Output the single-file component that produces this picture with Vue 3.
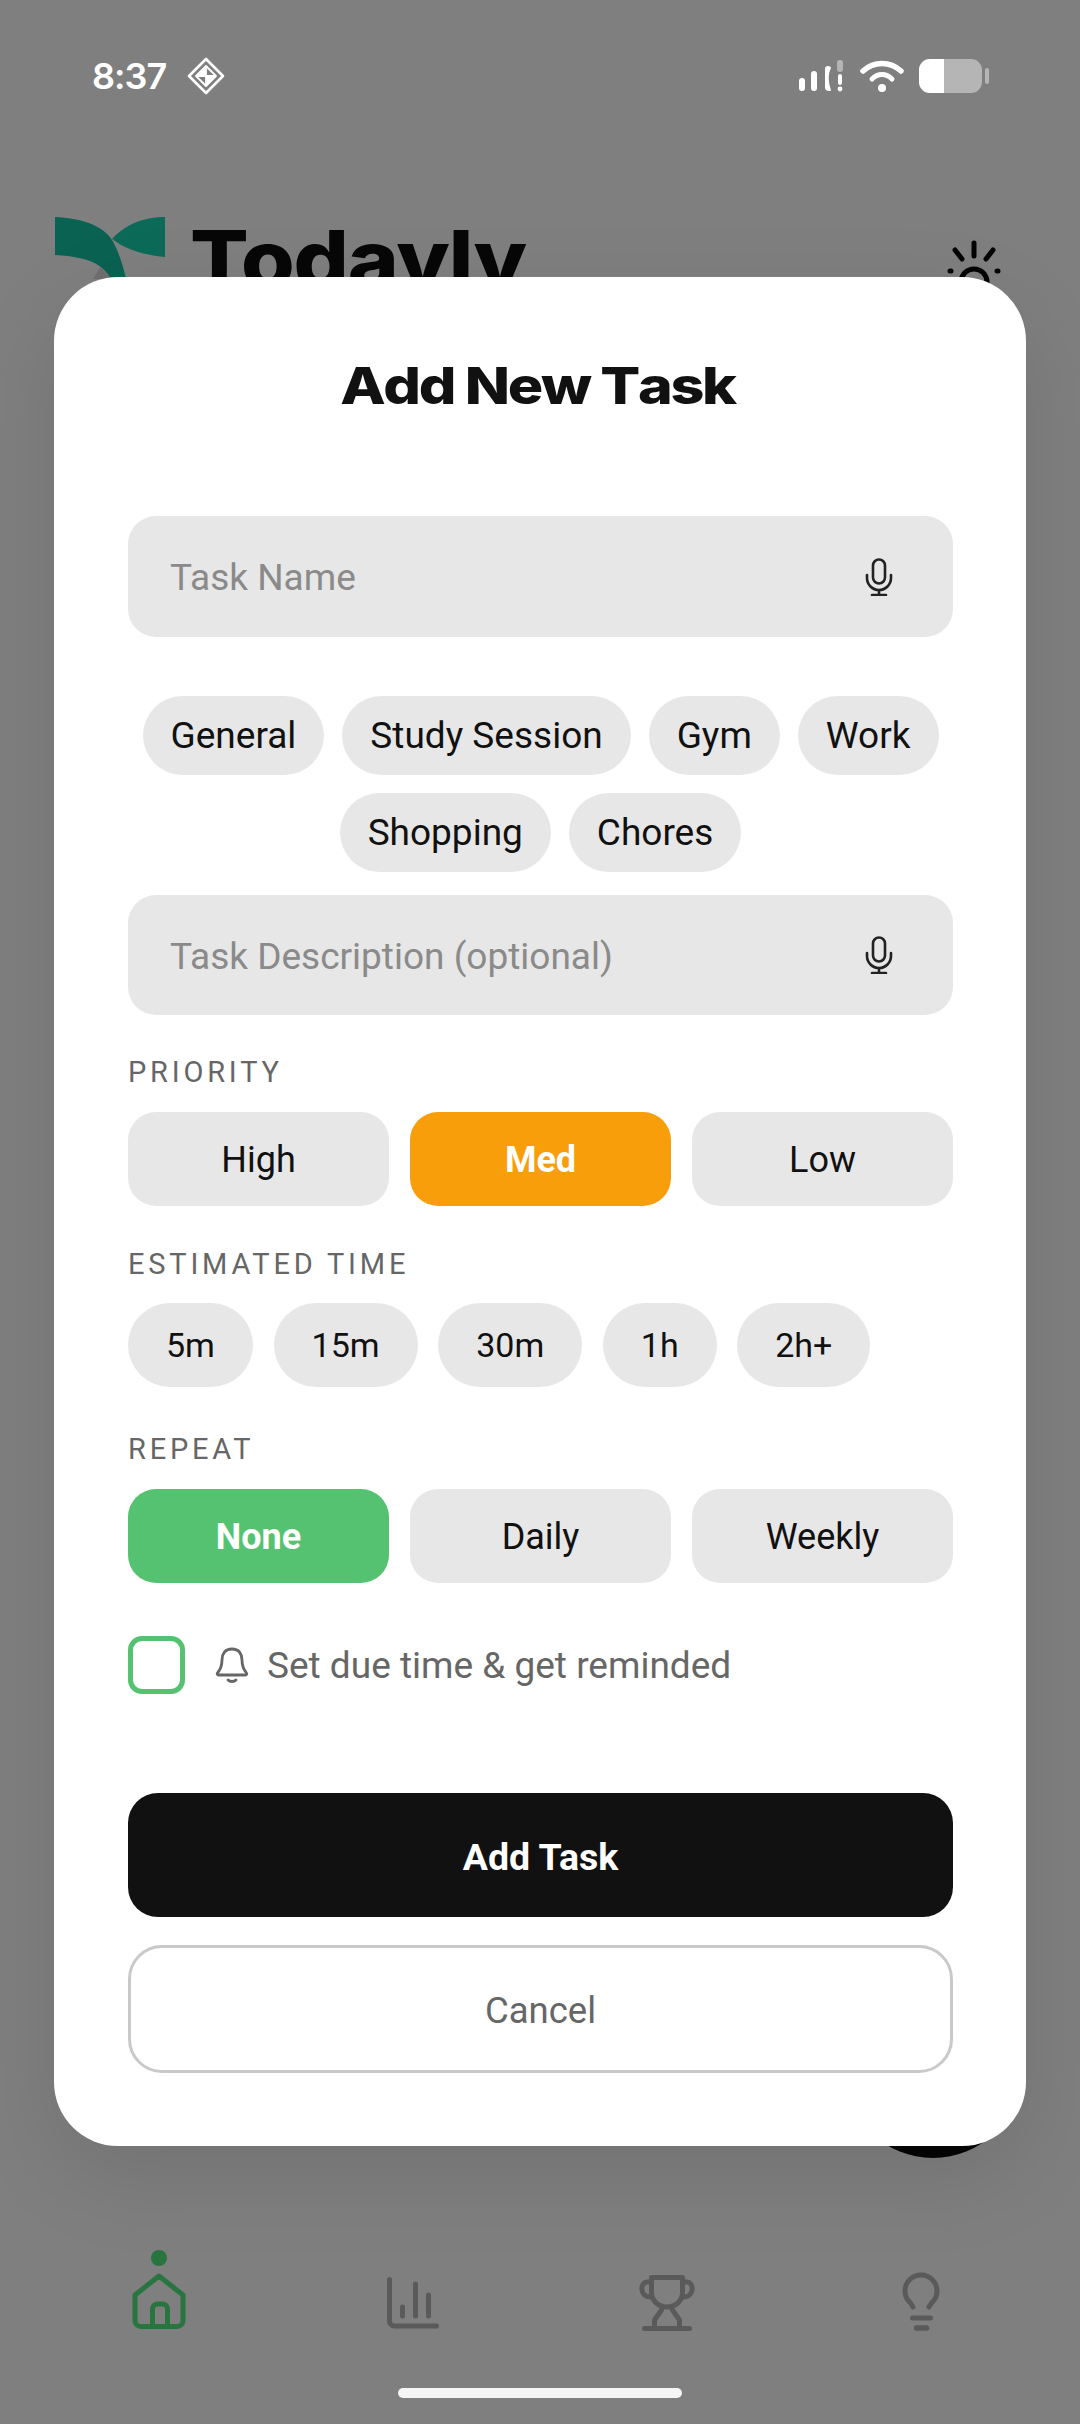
<script setup>
const categories = ['General', 'Study Session', 'Gym', 'Work', 'Shopping', 'Chores']
const priorities = [
  { label: 'High' },
  { label: 'Med', active: 'orange' },
  { label: 'Low' },
]
const times = ['5m', '15m', '30m', '1h', '2h+']
const repeats = [
  { label: 'None', active: 'green' },
  { label: 'Daily' },
  { label: 'Weekly' },
]
</script>

<template>
  <div class="screen">
    <div class="status">
      <div class="status-left">
        <span class="clock">8:37</span>
        <svg class="diamond" viewBox="0 0 38 38" fill="none" stroke="#fff" stroke-width="2.6" stroke-linejoin="round">
          <path d="M19 2 36 19 19 36 2 19Z" />
          <path d="M19 9 29 19 19 29 9 19ZM19 9v20M9 19h20M14 14l10 10" stroke-width="1.8" />
          <path d="M19 10v8h-8zM28 20h-8v8z" fill="#fff" stroke="none" />
        </svg>
      </div>
      <div class="status-right">
        <svg class="signal" viewBox="0 0 46 34" fill="#fff">
          <rect x="0" y="19" width="6" height="13" rx="3" />
          <rect x="12" y="12" width="6" height="20" rx="3" />
          <path d="M29 7c2 0 3 1 3 2-3 6-3 14 0 22 0 1-1 1-2 1-2 0-4-1-4-3V10c0-2 1-3 3-3z" />
          <rect x="38" y="1" width="6" height="12" rx="3" fill="#b5b5b5" />
          <rect x="39" y="15" width="4" height="11" rx="2" />
          <circle cx="41" cy="30" r="2.4" />
        </svg>
        <svg class="wifi" viewBox="0 0 44 34" fill="none" stroke="#fff" stroke-linecap="round">
          <path d="M3 12C14 2 30 2 41 12" stroke-width="5.5" />
          <path d="M12 20C18 14 26 14 32 20" stroke-width="5" />
          <circle cx="22" cy="29" r="4" fill="#fff" stroke="none" />
        </svg>
        <div class="battery"><div class="battery-fill"></div></div>
        <div class="battery-nub"></div>
      </div>
    </div>

    <div class="app-header">
      <div class="brand">
        <svg class="logo" viewBox="0 0 110 62">
          <path d="M38 62 49 44 60 62Z" fill="#6e6e6e" />
          <path d="M0 0C25 1 48 8 57 23 63 33 68 48 71 62H56C50 50 38 40 0 38Z" fill="#0a6252" />
          <path d="M110 0C85 0 68 10 57 22 70 32 88 38 110 40Z" fill="#0c6a59" />
        </svg>
        <span class="brand-name">Todayly</span>
      </div>
      <svg class="sun" viewBox="0 0 60 60" fill="none" stroke="#050505" stroke-width="5" stroke-linecap="round">
        <circle cx="30" cy="42" r="13" />
        <path d="M30 3v13M11 10l7 9M49 10l-7 9M6 31h1M53 31h1" />
      </svg>
    </div>

    <div class="spacer"></div>

    <nav class="tabbar">
      <div class="tab">
        <span class="tab-dot"></span>
        <svg class="tab-icon" viewBox="-3.5 -1 60 60" fill="none" stroke="#28753f" stroke-width="5" stroke-linecap="round" stroke-linejoin="round">
          <path d="M26.5 3 50.5 22V47.5a6 6 0 0 1-6 6H8.5a6 6 0 0 1-6-6V22Z" />
          <path d="M20 53V36a5 5 0 0 1 5-5H30a5 5 0 0 1 5 5V53" />
        </svg>
      </div>
      <div class="tab">
        <svg class="tab-icon" viewBox="-3.5 -5 60 60" fill="none" stroke="#5a5a5a" stroke-width="5" stroke-linecap="round" stroke-linejoin="round">
          <path d="M3 2.5V44a5 5 0 0 0 5 5H50" />
          <path d="M16 30v9M29 7v32M42 18v21" />
        </svg>
      </div>
      <div class="tab">
        <svg class="tab-icon" viewBox="-1.5 -2 60 60" fill="none" stroke="#5a5a5a" stroke-width="5" stroke-linecap="round" stroke-linejoin="round">
          <path d="M13 3.5H44V18C44 27 37 33 28.5 33S13 27 13 18Z" />
          <path d="M13 8H9C1 8 1 23 12 23M44 8H48C56 8 56 23 45 23" />
          <path d="M23 36 16 46V54M34 36 41 46V54" />
          <path d="M6 54.5H51" />
        </svg>
      </div>
      <div class="tab">
        <svg class="tab-icon" viewBox="-11.5 -2 60 60" fill="none" stroke="#5a5a5a" stroke-width="5" stroke-linecap="round" stroke-linejoin="round">
          <path d="M10.5 33 8 29A16 16 0 1 1 29 29L26.5 33" />
          <path d="M10 44H28" />
          <path d="M14 54H24" stroke-width="5.5" />
        </svg>
      </div>
    </nav>
    <div class="home-bar-row"><div class="home-bar"></div></div>

    <div class="fab"></div>

    <section class="modal">
      <h1 class="title">Add New Task</h1>

      <div class="field name-field">
        <span class="placeholder">Task Name</span>
        <svg class="mic" viewBox="0 0 28 38" fill="none" stroke="#222" stroke-width="2.6" stroke-linecap="round">
          <rect x="8" y="1.5" width="12" height="24" rx="6" />
          <path d="M2 17v3a12 12 0 0 0 24 0v-3M14 32v5M7 37h14" />
        </svg>
      </div>

      <div class="categories">
        <button v-for="c in categories" :key="c" class="chip cat-chip">{{ c }}</button>
      </div>

      <div class="field desc-field">
        <span class="placeholder">Task Description (optional)</span>
        <svg class="mic" viewBox="0 0 28 38" fill="none" stroke="#222" stroke-width="2.6" stroke-linecap="round">
          <rect x="8" y="1.5" width="12" height="24" rx="6" />
          <path d="M2 17v3a12 12 0 0 0 24 0v-3M14 32v5M7 37h14" />
        </svg>
      </div>

      <div class="label label-priority">PRIORITY</div>
      <div class="segments">
        <button
          v-for="p in priorities"
          :key="p.label"
          class="segment"
          :class="p.active"
        >
          {{ p.label }}
        </button>
      </div>

      <div class="label label-time">ESTIMATED TIME</div>
      <div class="times">
        <button v-for="t in times" :key="t" class="chip time-chip">{{ t }}</button>
      </div>

      <div class="label label-repeat">REPEAT</div>
      <div class="segments">
        <button
          v-for="r in repeats"
          :key="r.label"
          class="segment"
          :class="r.active"
        >
          {{ r.label }}
        </button>
      </div>

      <label class="reminder">
        <span class="checkbox"></span>
        <svg class="bell" viewBox="0 0 34 36" fill="none" stroke="#666" stroke-width="2.8" stroke-linecap="round" stroke-linejoin="round">
          <path d="M17 2C10 2 7 7 7 13c0 7-2 10-4.5 13-.8 1 0 2 1 2h27c1 0 1.800-1 1-2C29 23 27 20 27 13 27 7 24 2 17 2Z" />
          <path d="M13 33c2 2 6 2 8 0" />
        </svg>
        <span class="reminder-text">Set due time &amp; get reminded</span>
      </label>

      <button class="submit">Add Task</button>
      <button class="cancel">Cancel</button>
    </section>
  </div>
</template>

<style>
html,
body {
  margin: 0;
  background: #7f7f7f;
}
</style>

<style scoped>
.screen {
  position: relative;
  width: 1080px;
  height: 2424px;
  overflow: hidden;
  display: flex;
  flex-direction: column;
  background: #7f7f7f;
  font-family: Roboto, "Noto Sans", sans-serif;
}

.status {
  height: 60px;
  padding: 46px 92px 0;
  display: flex;
  justify-content: space-between;
  align-items: center;
}

.status-left {
  display: flex;
  align-items: center;
  gap: 21px;
}

.clock {
  font-family: Inter, sans-serif;
  font-size: 36px;
  font-weight: 600;
  letter-spacing: -1px;
  color: #fff;
}

.diamond {
  width: 38px;
  height: 38px;
}

.status-right {
  display: flex;
  align-items: center;
  margin-right: -1px;
}

.signal {
  width: 46px;
  height: 34px;
  margin-right: 15px;
}

.wifi {
  width: 44px;
  height: 34px;
  margin-right: 15px;
}

.battery {
  width: 63px;
  height: 34px;
  border-radius: 11px;
  background: #b5b5b5;
  overflow: hidden;
}

.battery-fill {
  width: 25px;
  height: 100%;
  background: #fff;
}

.battery-nub {
  width: 4px;
  height: 16px;
  margin-left: 3px;
  border-radius: 2px;
  background: #b5b5b5;
}

.app-header {
  margin-top: 111px;
  padding: 0 76px 0 55px;
  display: flex;
  justify-content: space-between;
}

.brand {
  display: flex;
  align-items: flex-start;
  gap: 25px;
}

.logo {
  width: 110px;
  height: 62px;
}

.brand-name {
  font-family: Inter, sans-serif;
  font-size: 80px;
  font-weight: 800;
  line-height: 84px;
  letter-spacing: -1px;
  color: #070707;
  transform: scaleX(1.085);
  transform-origin: left;
}

.sun {
  width: 60px;
  height: 60px;
  margin-top: 23px;
}

.spacer {
  flex: 1;
}

.tabbar {
  display: grid;
  grid-template-columns: repeat(4, 1fr);
  padding: 0 32px;
  margin-bottom: 56px;
}

.tab {
  display: flex;
  flex-direction: column;
  align-items: center;
  justify-content: flex-end;
}

.tab-dot {
  width: 16px;
  height: 16px;
  margin-bottom: 6px;
  border-radius: 50%;
  background: #28753f;
}

.tab-icon {
  width: 60px;
  height: 60px;
}

.home-bar-row {
  height: 36px;
  display: flex;
  justify-content: center;
}

.home-bar {
  width: 284px;
  height: 10px;
  border-radius: 5px;
  background: #f5f5f5;
}

/* the button behind the sheet, only its lower edge shows */
.fab {
  position: absolute;
  left: 845px;
  top: 1982px;
  width: 176px;
  height: 176px;
  border-radius: 50%;
  background: #050505;
}

.modal {
  position: absolute;
  left: 54px;
  top: 277px;
  width: 972px;
  height: 1869px;
  box-sizing: border-box;
  padding: 0 73px 0 74px;
  border-radius: 64px;
  background: #fff;
  box-shadow: 0 30px 90px rgba(0, 0, 0, 0.1);
  display: flex;
  flex-direction: column;
}

.title {
  margin: 78px 0 0;
  height: 62px;
  font-family: Inter, sans-serif;
  font-size: 51px;
  font-weight: 800;
  font-kerning: none;
  line-height: 62px;
  letter-spacing: -2px;
  text-align: center;
  color: #111;
  transform: translateX(-3px) scaleX(1.16);
}

.field {
  display: flex;
  align-items: center;
  justify-content: space-between;
  padding: 0 60px 0 42px;
  border-radius: 28px;
  background: #e7e7e7;
}

.name-field {
  height: 121px;
  margin-top: 99px;
}

.desc-field {
  height: 120px;
  margin-top: 23px;
}

.placeholder {
  padding-top: 2px;
  font-size: 37px;
  color: #8a8a8a;
}

.mic {
  width: 28px;
  height: 38px;
}

button {
  border: 0;
  padding: 0;
  font-family: inherit;
}

.chip {
  background: #e7e7e7;
  color: #111;
  border-radius: 44px;
}

.categories {
  margin-top: 59px;
  display: flex;
  flex-wrap: wrap;
  justify-content: center;
  gap: 18px;
}

.cat-chip {
  height: 79px;
  padding: 0 28px;
  font-size: 37px;
}

.label {
  font-size: 29px;
  line-height: 34px;
  letter-spacing: 3.8px;
  color: #666;
}

.label-priority {
  margin-top: 40px;
}

.label-time {
  margin-top: 41px;
}

.label-repeat {
  margin-top: 45px;
}

.segments {
  margin-top: 23px;
  display: grid;
  grid-template-columns: repeat(3, 1fr);
  gap: 21px;
}

.segment {
  height: 94px;
  padding-top: 2px;
  border-radius: 28px;
  background: #e7e7e7;
  color: #111;
  font-size: 36px;
}

.segment.orange {
  background: #f89e0b;
  color: #fff;
  font-weight: 700;
}

.segment.green {
  background: #55c271;
  color: #fff;
  font-weight: 700;
}

.times {
  margin-top: 22px;
  display: flex;
  gap: 20.6px;
}

.time-chip {
  height: 84px;
  padding: 0 38px;
  font-size: 34px;
}

.reminder {
  margin-top: 53px;
  display: flex;
  align-items: center;
}

.checkbox {
  box-sizing: border-box;
  width: 57px;
  height: 58px;
  border: 5px solid #55c271;
  border-radius: 14px;
}

.bell {
  width: 34px;
  height: 36px;
  margin-left: 30px;
}

.reminder-text {
  margin-left: 18px;
  font-size: 37px;
  color: #666;
}

.submit {
  margin-top: 99px;
  height: 124px;
  padding-top: 3px;
  border-radius: 30px;
  background: #111;
  color: #fff;
  font-size: 37.5px;
  font-weight: 700;
}

.cancel {
  margin-top: 28px;
  height: 128px;
  padding-top: 3px;
  box-sizing: border-box;
  border: 3px solid #c9c9c9;
  border-radius: 34px;
  background: #fff;
  color: #666;
  font-size: 36.5px;
}
</style>
